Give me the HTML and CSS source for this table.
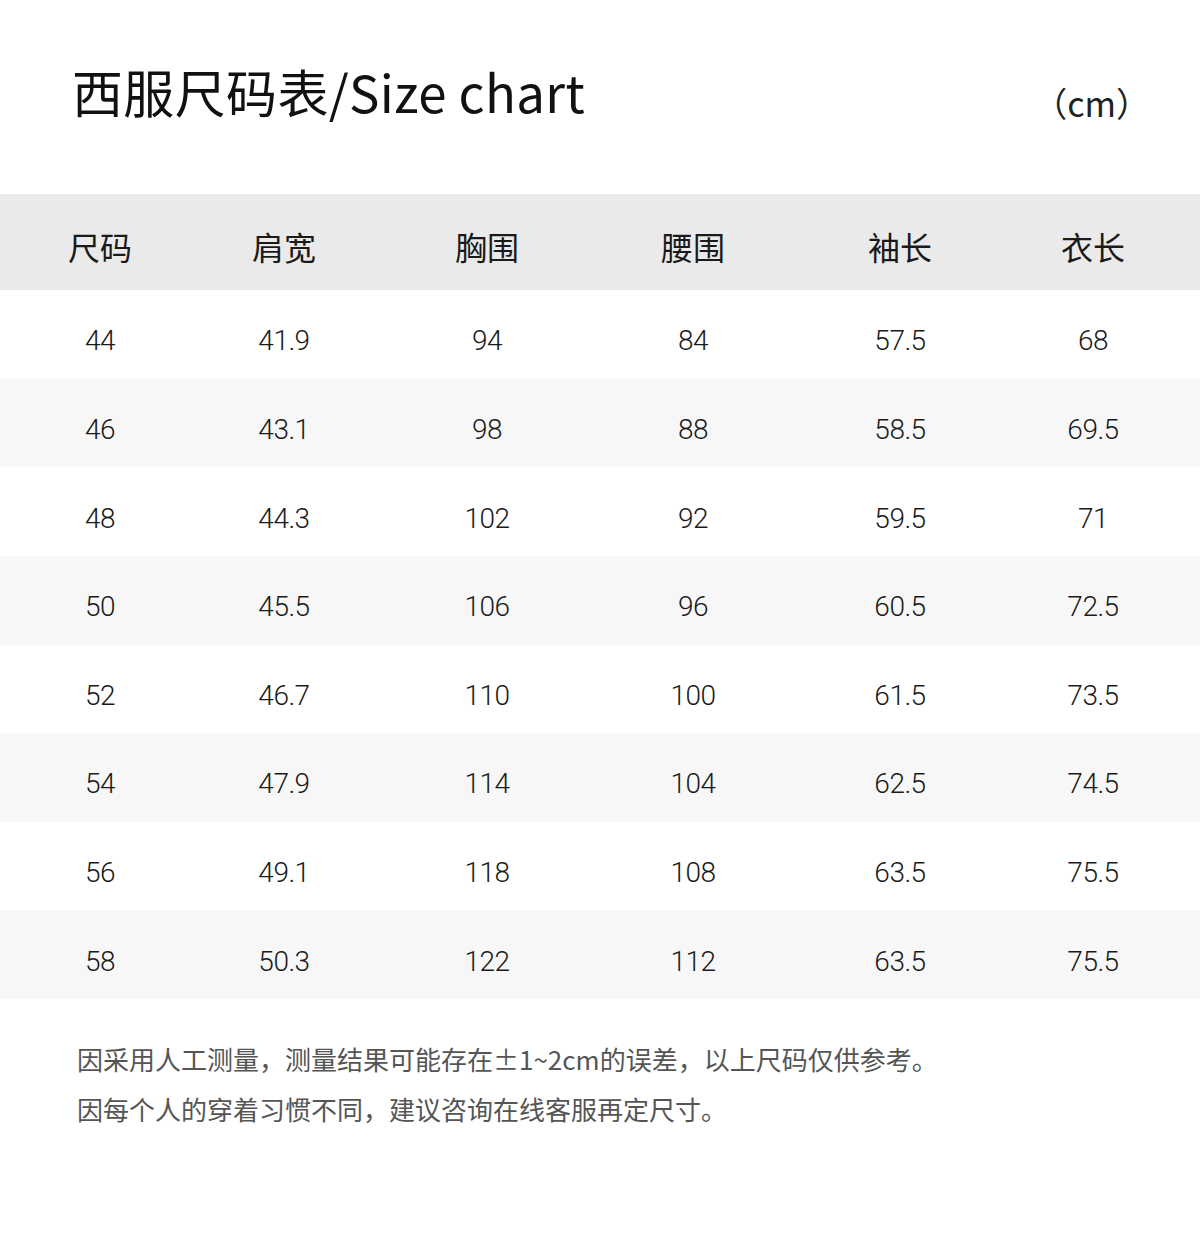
FILE: index.html
```html
<!DOCTYPE html>
<html lang="zh-CN">
<head>
<meta charset="utf-8">
<title>西服尺码表</title>
<link rel="stylesheet" href="styles.css">
</head>
<body>
<div class="page">
  <header class="top">
    <h1 class="title">西服尺码表/Size chart</h1>
    <div class="unit">（cm）</div>
  </header>
  <div class="table">
    <div class="row head">
      <div class="cell">尺码</div><div class="cell">肩宽</div><div class="cell">胸围</div><div class="cell">腰围</div><div class="cell">袖长</div><div class="cell">衣长</div>
    </div>
    <div class="row">
      <div class="cell">44</div><div class="cell">41.9</div><div class="cell">94</div><div class="cell">84</div><div class="cell">57.5</div><div class="cell">68</div>
    </div>
    <div class="row alt">
      <div class="cell">46</div><div class="cell">43.1</div><div class="cell">98</div><div class="cell">88</div><div class="cell">58.5</div><div class="cell">69.5</div>
    </div>
    <div class="row">
      <div class="cell">48</div><div class="cell">44.3</div><div class="cell">102</div><div class="cell">92</div><div class="cell">59.5</div><div class="cell">71</div>
    </div>
    <div class="row alt">
      <div class="cell">50</div><div class="cell">45.5</div><div class="cell">106</div><div class="cell">96</div><div class="cell">60.5</div><div class="cell">72.5</div>
    </div>
    <div class="row">
      <div class="cell">52</div><div class="cell">46.7</div><div class="cell">110</div><div class="cell">100</div><div class="cell">61.5</div><div class="cell">73.5</div>
    </div>
    <div class="row alt">
      <div class="cell">54</div><div class="cell">47.9</div><div class="cell">114</div><div class="cell">104</div><div class="cell">62.5</div><div class="cell">74.5</div>
    </div>
    <div class="row">
      <div class="cell">56</div><div class="cell">49.1</div><div class="cell">118</div><div class="cell">108</div><div class="cell">63.5</div><div class="cell">75.5</div>
    </div>
    <div class="row alt">
      <div class="cell">58</div><div class="cell">50.3</div><div class="cell">122</div><div class="cell">112</div><div class="cell">63.5</div><div class="cell">75.5</div>
    </div>
  </div>
  <div class="notes">
    <p>因采用人工测量，测量结果可能存在±1~2cm的误差，以上尺码仅供参考。</p>
    <p>因每个人的穿着习惯不同，建议咨询在线客服再定尺寸。</p>
  </div>
</div>
</body>
</html>
```
FILE: styles.css
```css
* { box-sizing: border-box; }
html, body {
  margin: 0;
  padding: 0;
  background: #ffffff;
}
body {
  font-family: "Noto Sans CJK SC", "Noto Sans", sans-serif;
  color: #1a1a1a;
}
.page {
  width: 1200px;
  height: 1239px;
  overflow: hidden;
}
.top {
  height: 194px;
  display: flex;
  justify-content: space-between;
  align-items: flex-start;
  padding: 66px 50px 0 72px;
}
.title {
  margin: 0;
  font-size: 51px;
  font-weight: 400;
  line-height: 1;
  letter-spacing: 0.35px;
  color: #111;
}
.unit {
  font-size: 34px;
  line-height: 1;
  margin-top: 20px;
  color: #222;
}
.table {
  display: flex;
  flex-direction: column;
}
.row {
  display: grid;
  grid-template-columns: 200px 168px 238px 174px 240px 146px;
  height: 88.625px;
  align-items: center;
  font-family: "Roboto", "Noto Sans", sans-serif;
  font-weight: 300;
  font-size: 28px;
  letter-spacing: -0.5px;
  color: #1a1a1a;
  padding-top: 14px;
}
.row.alt {
  background: #f7f7f7;
}
.row.head {
  height: 96px;
  background: #eaeaea;
  font-family: "Noto Sans CJK SC", sans-serif;
  font-weight: 400;
  font-size: 32px;
  letter-spacing: 0;
  padding-top: 8px;
}
.cell {
  text-align: center;
  line-height: 1;
}
.notes {
  padding: 35px 0 0 77px;
  font-size: 26px;
  color: #555;
}
.notes p {
  margin: 0;
  line-height: 50px;
}
```
